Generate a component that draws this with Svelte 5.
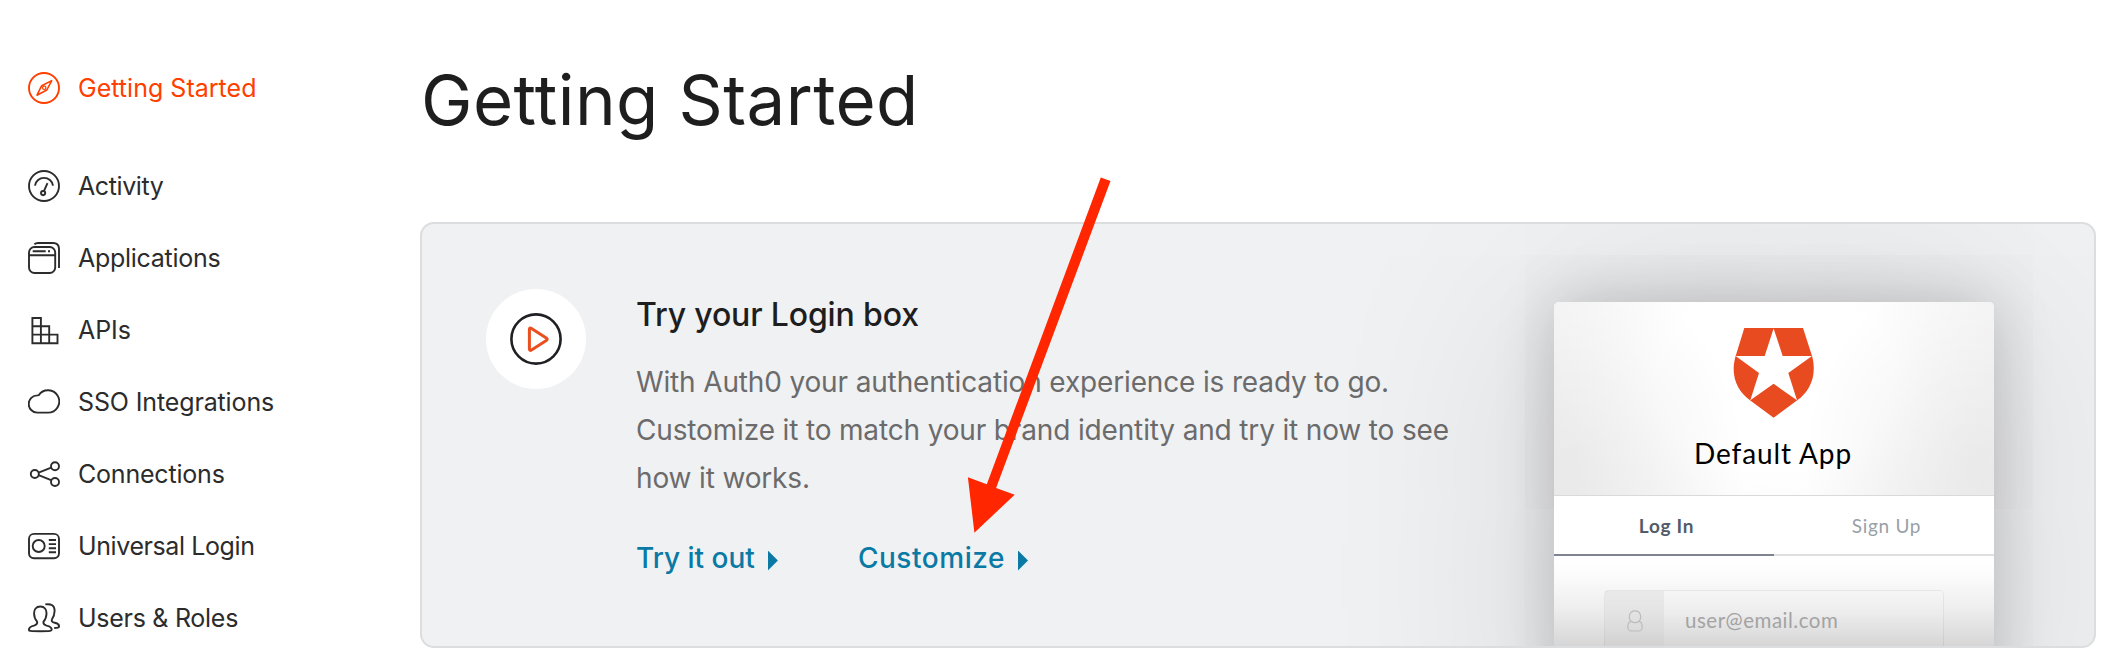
<script>
  const nav = [
    { id: 'start', label: 'Getting Started', active: true, tracking: 0.02 },
    { id: 'activity', label: 'Activity', tracking: -0.4 },
    { id: 'apps', label: 'Applications', tracking: -0.28 },
    { id: 'apis', label: 'APIs', tracking: -0.08 },
    { id: 'sso', label: 'SSO Integrations', tracking: -0.13 },
    { id: 'connections', label: 'Connections', tracking: -0.2 },
    { id: 'login', label: 'Universal Login', tracking: -0.4 },
    { id: 'users', label: 'Users & Roles', tracking: -0.28 }
  ];
</script>

<div class="page">
  <nav class="sidebar">
    {#each nav as item (item.id)}
      <a class="item" class:active={item.active} href="#{item.id}" style:letter-spacing="{item.tracking}px">
        <svg class="icon" viewBox="0 0 32 32" fill="none" stroke="currentColor" stroke-width="1.9">
          {#if item.id === 'start'}
            <circle cx="16" cy="16" r="15" />
            <path d="M23.7 8.600 18.800 18 9 23.200 13.700 13.700Z" stroke-width="1.6" stroke-linejoin="round" />
            <circle cx="16.2" cy="15.8" r="1.7" stroke-width="1.2" />
          {:else if item.id === 'activity'}
            <circle cx="16" cy="16" r="15" />
            <path d="M7 15.6a9.1 9.1 0 0 1 18 0M19.5 13.2 15.9 21.2" />
            <circle cx="15.1" cy="23.1" r="2.1" />
          {:else if item.id === 'apps'}
            <rect x="1" y="5" width="26.2" height="26" rx="5.5" />
            <path d="M1 13.2h26M4.7 9.3h13M20 9.3h2" />
            <path d="M6.4 2.3Q7.8 1 10 1H25Q31 1 31 7V26" />
          {:else if item.id === 'apis'}
            <path d="M4.4 4h8.5v25.3H4.4ZM4.4 12.3h16.8v17M4.4 20.6h25.1v8.7H4.4" />
          {:else if item.id === 'sso'}
            <path d="M9.2 26.6H20A11.2 11.2 0 1 0 10.7 9.2L9.4 9.4A8.6 8.6 0 0 0 9.2 26.6Z" />
          {:else if item.id === 'connections'}
            <circle cx="6.8" cy="16" r="4" />
            <circle cx="27" cy="8.2" r="4" />
            <circle cx="27" cy="24" r="4" />
            <path d="m10.6 14.7 12.6-5M10.6 17.2l12.5 5" />
          {:else if item.id === 'login'}
            <rect x="1" y="3.9" width="30" height="24.4" rx="5" />
            <circle cx="10.7" cy="16" r="6" />
            <path d="M20.8 10h7.2M20.8 14.1h7.2M20.8 18.2h7.2M20.8 22.3h7.2" />
          {:else}
            <path d="M12.3 4.5c-4.2 0-6.4 2.9-6.2 7.2.1 3.6 1.4 6.2 3 8 .5 2.2-.4 3.1-3.1 3.9C2.5 24.5.9 25.3.9 27.6c0 .8.4 1.2 1.5 1.3 3.8.5 16 .5 19.8 0 1.1-.1 1.5-.5 1.5-1.3 0-2.3-1.6-3.1-5.1-4-2.7-.8-3.6-1.7-3.1-3.9 1.6-1.8 2.9-4.4 3-8 .2-4.3-2-7.2-6.2-7.2Z" />
            <path d="M17.3 2.4c5.7-.9 9.5.9 9.3 6.6-.1 3.4-.9 5.8-2.5 8-.9 2.1 0 3.2 2.600 3.700 3 .6 4.400 1.600 4.400 3.800 0 1-.8 1.400-4.900 1.500" />
          {/if}
        </svg>
        <span>{item.label}</span>
      </a>
    {/each}
  </nav>

  <main>
    <h1>Getting Started</h1>
    <section class="card">
      <div class="badge">
        <svg viewBox="0 0 52 52" fill="none">
          <circle cx="26" cy="26" r="24.6" stroke="#1f1f24" stroke-width="2.6" />
          <path d="M19.4 16.6v19.2q0 2.4 2.1 1.2l14.8-9.4q1.9-1.3 0-2.6l-14.8-9.5q-2.1-1.3-2.1 1.1Z" stroke="#eb4f20" stroke-width="3" stroke-linejoin="round" />
        </svg>
      </div>
      <div class="copy">
        <h2>Try your Login box</h2>
        <p>With Auth0 your authentication experience is ready to go. Customize it to match your brand identity and try it now to see how it works.</p>
        <div class="links">
          <a href="#try">Try it out<i></i></a>
          <a class="customize" href="#customize">Customize<i></i></a>
        </div>
      </div>

      <div class="lock">
        <header>
          <svg viewBox="0 0 81 90">
            <path fill="#e94b21" d="M11.3 0H70L79.2 28.5C84 47 77.500 63 63.900 72.500L40.600 89.700 17.300 72.500C3.700 63-2.800 47 2.500 28.500Z" />
            <path fill="#fff" d="M40.6.5 49.7 27.9H79L55.3 45.1 64 72.3 40.600 55.800 17.300 72.300 26 45.100 2.600 27.900H31.700Z" />
          </svg>
          <strong>Default App</strong>
        </header>
        <div class="tabs">
          <span class="on">Log In</span>
          <span>Sign Up</span>
        </div>
        <div class="form">
          <div class="field">
            <div class="cell">
              <svg viewBox="0 0 16 22" fill="none" stroke="#bcbcbc" stroke-width="1.2">
                <path d="M4.3 11.5C1.2 8.5 1.5.8 8 .8s6.8 7.7 3.7 10.7c-1.5 1.4-5.9 1.4-7.4 0Z" />
                <path d="M4 11.2C1.8 12 .8 13.5.8 16.5c0 3.5 1 4.5 4 4.500h6.400c3 0 4-1 4-4.500 0-3-1-4.500-3.200-5.300" />
              </svg>
            </div>
            <span>user@email.com</span>
          </div>
        </div>
      </div>
    </section>
  </main>

  <svg class="arrow" viewBox="0 0 2124 670">
    <path fill="#ff2600" d="M1100.8 177.5 1110.5 181 996.1 488 1014.7 494.7 974.4 532.7 967.9 477.3 986.8 484.3Z" />
  </svg>
</div>

<style>
  :global(body) { background: #fff; }
  .page {
    position: relative;
    display: flex;
    width: 2124px;
    height: 670px;
    overflow: hidden;
    box-sizing: border-box;
    font-family: Inter, "Liberation Sans", sans-serif;
  }
  .sidebar { width: 420px; padding: 52px 0 0 28px; box-sizing: border-box; flex: none; }
  .item {
    display: flex;
    align-items: center;
    gap: 18px;
    height: 72px;
    color: #2c2c2c;
    font-size: 25px;
    line-height: 32px;
    text-decoration: none;
  }
  .item span { padding-bottom: 1px; }
  .item.active { color: #ff3e00; margin-bottom: 26px; }
  .icon { width: 32px; height: 32px; flex: none; }
  main { width: 1676px; padding-top: 60px; flex: none; }
  h1 {
    margin: 0 0 82px;
    padding-left: 1px;
    font-size: 69px;
    line-height: 80px;
    font-weight: 400;
    letter-spacing: 0.4px;
    color: #1e1e1e;
  }
  .card {
    display: flex;
    align-items: flex-start;
    box-sizing: border-box;
    height: 426px;
    padding: 0 100px 0 64px;
    border: 2px solid #dcddde;
    border-radius: 14px;
    background: #f0f1f3;
    overflow: hidden;
  }
  .badge {
    display: grid;
    place-items: center;
    width: 100px;
    height: 100px;
    margin-top: 65px;
    border-radius: 50%;
    background: #fff;
    flex: none;
  }
  .badge svg { width: 52px; height: 52px; }
  .copy { width: 840px; margin: 71px 0 0 50px; flex: none; }
  h2 {
    margin: 0 0 23px;
    font-size: 32px;
    line-height: 40px;
    font-weight: 500;
    letter-spacing: -0.15px;
    color: #1e1e1e;
  }
  p { margin: 0; font-size: 28px; line-height: 48px; letter-spacing: -0.15px; color: #6b6b6b; }
  .links { display: flex; gap: 80px; margin-top: 36px; }
  .links a {
    display: flex;
    align-items: center;
    gap: 13px;
    height: 40px;
    font-size: 28px;
    font-weight: 500;
    color: #0a7aa5;
    text-decoration: none;
  }
  .links .customize { letter-spacing: 0.55px; }
  .links i {
    width: 10px;
    height: 20px;
    margin-top: 5px;
    background: currentColor;
    clip-path: polygon(0 0, 100% 50%, 0 100%);
  }
  .lock {
    width: 440px;
    height: 460px;
    margin: 78px 0 0 auto;
    border-radius: 5px 5px 0 0;
    background: #fff;
    box-shadow: 0 0 60px rgba(0, 0, 0, 0.19), 0 10px 220px 12px rgba(0, 0, 0, 0.14);
    font-family: Lato, "Liberation Sans", sans-serif;
    flex: none;
  }
  header {
    display: flex;
    flex-direction: column;
    align-items: center;
    box-sizing: border-box;
    height: 194px;
    padding-top: 26px;
    border-bottom: 1px solid #dadada;
    border-radius: 5px 5px 0 0;
    background:
      radial-gradient(ellipse 170px 190px at 5% 82%, rgba(0, 0, 0, 0.055), rgba(0, 0, 0, 0.035) 45%, transparent),
      radial-gradient(ellipse 170px 190px at 95% 82%, rgba(0, 0, 0, 0.055), rgba(0, 0, 0, 0.035) 45%, transparent),
      radial-gradient(ellipse 300px 230px at 50% 40%, #fff 40%, #f2f2f2);
  }
  header svg { width: 81px; height: 90px; margin-right: 1px; }
  header strong { margin: 15px 2px 0 0; font-size: 28px; line-height: 40px; font-weight: 400; letter-spacing: 0.9px; color: #000; }
  .tabs { display: flex; height: 60px; }
  .tabs span {
    flex: 1;
    box-sizing: border-box;
    padding-left: 5px;
    border-bottom: 2px solid #dfdfdf;
    font-size: 19px;
    line-height: 59px;
    text-align: center;
    letter-spacing: 0.7px;
    color: #9a9fa6;
  }
  .tabs .on { border-color: #7f8490; font-weight: 700; color: #525c68; }
  .form {
    height: 206px;
    padding: 34px 50px 0;
    background: linear-gradient(#fff 0, #fcfcfc 18px, #ededed 54px, #d6d6d6 90px);
  }
  .field {
    display: flex;
    align-items: center;
    box-sizing: border-box;
    height: 84px;
    width: 340px;
    border: 1px solid rgba(0, 0, 0, 0.06);
    border-radius: 5px;
    background: linear-gradient(rgba(255, 255, 255, 0.15), transparent 55px);
    color: #a3a3a3;
    font-size: 20.5px;
    letter-spacing: 0.5px;
  }
  .field span { padding: 0 0 25px 21px; }
  .cell {
    display: flex;
    justify-content: center;
    box-sizing: border-box;
    align-self: stretch;
    width: 59px;
    padding: 19px 0 0 0;
    background: linear-gradient(rgba(0, 0, 0, 0.05), rgba(0, 0, 0, 0.02) 55px);
  }
  .cell svg { width: 16px; height: 22px; }
  .arrow { position: absolute; inset: 0; width: 2124px; height: 670px; pointer-events: none; }
</style>
